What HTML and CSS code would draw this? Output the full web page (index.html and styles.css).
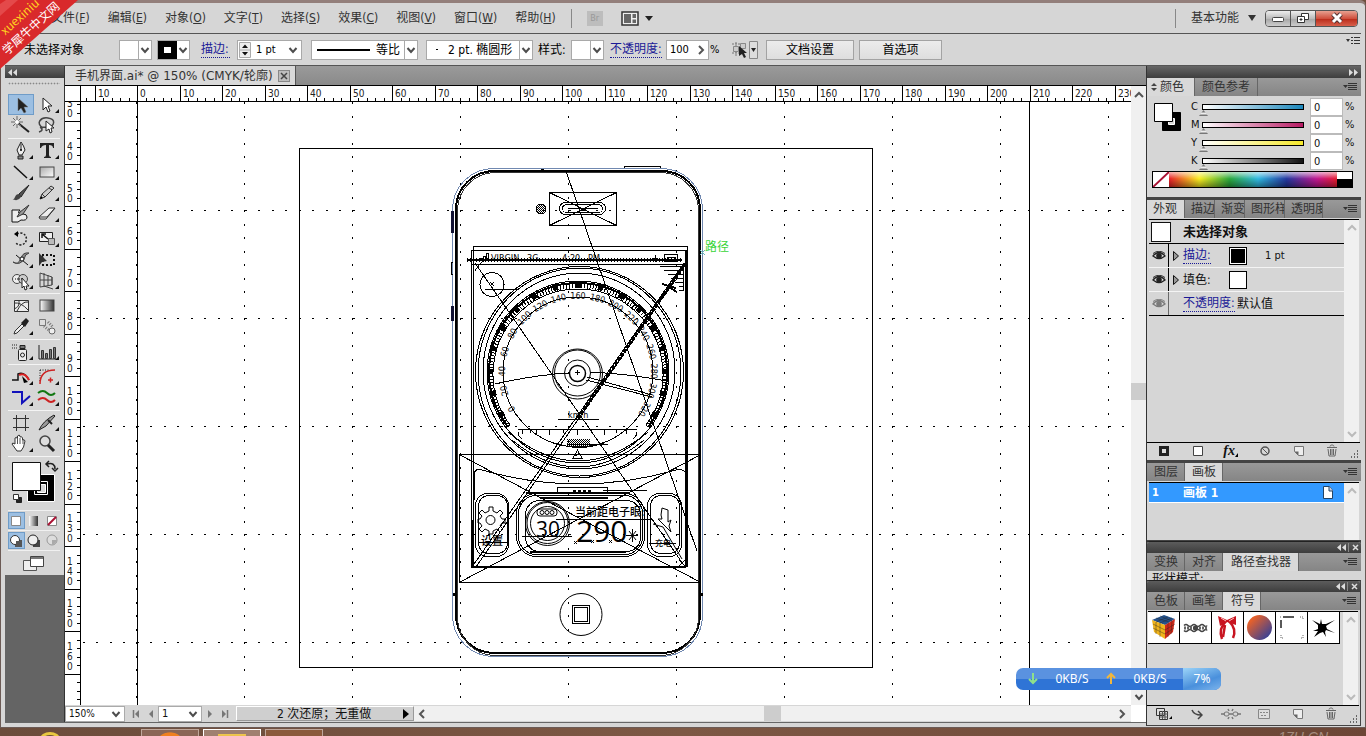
FILE: index.html
```html
<!DOCTYPE html>
<html lang="zh-CN">
<head>
<meta charset="utf-8">
<title>手机界面.ai</title>
<link rel="stylesheet" href="styles.css">
</head>
<body>
<svg class="defs" aria-hidden="true">
  <symbol id="chev" viewBox="0 0 10 10"><path d="M1.500 3l3.500 4 3.500-4" fill="none" stroke="#4d4d4d" stroke-width="2"/></symbol>
  <symbol id="flyout" viewBox="0 0 14 10"><path d="M0 3h5l-2.500 3z" fill="#333"/><path d="M5 1.500h9M5 3.500h9M5 5.500h9M5 7.500h9" stroke="#333"/></symbol>
  <symbol id="trash" viewBox="0 0 12 13"><path d="M1 3.500h10M4 2.500c0-2 4-2 4 0M2 5l1 7h6l1-7M4.500 5v6M6 5v6M7.500 5v6" fill="none" stroke="#666"/></symbol>
  <symbol id="newdoc" viewBox="0 0 12 12"><path d="M1.500 1.500h9v9h-5l-4-4z" fill="#eee" stroke="#777"/><path d="M1.500 6.500h4v4z" fill="#666"/></symbol>
  <symbol id="eye" viewBox="0 0 14 10"><path d="M1 5Q7-2 13 5 7 10 1 5z" fill="#ddd" stroke="#222" stroke-width="1.300"/><circle cx="7" cy="4.700" r="2.800" fill="#222"/><path d="M1 2.500Q7-2 13 2.500" fill="none" stroke="#333"/></symbol>
  <symbol id="size" viewBox="0 0 10 10"><path d="M8 1h1M5 4h1M8 4h1M2 7h1M5 7h1M8 7h1" stroke="#666" stroke-width="2"/></symbol>
</svg>

<div class="window">
  <header class="menubar">
    <nav class="menus">
      <button>文件(<u>F</u>)</button><button>编辑(<u>E</u>)</button><button>对象(<u>O</u>)</button><button>文字(<u>T</u>)</button><button>选择(<u>S</u>)</button><button>效果(<u>C</u>)</button><button>视图(<u>V</u>)</button><button>窗口(<u>W</u>)</button><button>帮助(<u>H</u>)</button>
    </nav>
    <i class="vsep"></i>
    <button class="bridge" disabled>Br</button>
    <button class="arrange" aria-label="排列文档"><svg width="32" height="15"><rect x="1" y="1" width="16" height="13" fill="#eee" stroke="#333" stroke-width="1.500"/><path d="M3 3h7v9H3zM11.500 3H15v4h-3.500zM11.500 8.500H15V12h-3.500z" fill="#666"/><path d="M24 5h8l-4 5z" fill="#222"/></svg></button>
    <div class="grow"></div>
    <i class="vsep"></i>
    <button class="workspace">基本功能 <svg width="8" height="6"><path d="M0 0h8L4 6z" fill="#333"/></svg></button>
    <div class="winbtns">
      <button aria-label="最小化"><svg width="14" height="12"><rect x="1.500" y="5.500" width="11" height="4" rx="1" fill="#fff" stroke="#444"/></svg></button><button aria-label="还原"><svg width="14" height="12"><path d="M5.500 1.500h7v6h-7z" fill="#fff" stroke="#333"/><path d="M1.500 4.500h7v6h-7z" fill="#fff" stroke="#333"/><path d="M4 7h2v1H4z" stroke="#333"/></svg></button><button class="close" aria-label="关闭"><svg width="16" height="12"><path d="M4 2l8 8M12 2l-8 8" stroke="#533" stroke-width="5"/><path d="M4 2l8 8M12 2l-8 8" stroke="#fff" stroke-width="3"/></svg></button>
    </div>
  </header>

  <div class="control">
    <span class="noselect">未选择对象</span>
    <button class="combo swatchbox" aria-label="填色"><b></b><svg class="chev"><use href="#chev"/></svg></button>
    <button class="combo swatchbox black" aria-label="描边颜色"><b></b><svg class="chev"><use href="#chev"/></svg></button>
    <a class="lk stroke-link" href="#">描边:</a>
    <span class="combo weight"><svg width="12" height="16"><path d="M.5.500h11v15H.5zM.5 8h11" fill="#eee" stroke="#aaa"/><path d="M3 6h6L6 2.500zM3 10h6l-3 3.500z" fill="#111"/></svg><select aria-label="描边粗细"><option>1 pt</option></select><svg class="chev"><use href="#chev"/></svg></span>
    <span class="combo profile"><i></i><select aria-label="宽度配置"><option>等比</option></select><svg class="chev"><use href="#chev"/></svg></span>
    <span class="combo brush"><i></i><select aria-label="画笔"><option>2 pt. 椭圆形</option></select><svg class="chev"><use href="#chev"/></svg></span>
    <span class="style-label">样式:</span>
    <button class="combo swatchbox" aria-label="样式"><b></b><svg class="chev"><use href="#chev"/></svg></button>
    <a class="lk opacity-link" href="#">不透明度:</a>
    <span class="combo opacity"><input aria-label="不透明度" value="100"><svg class="chev"><path d="M3 1l4 4-4 4" fill="none" stroke="#555" stroke-width="2"/></svg></span><span class="pct">%</span>
    <button class="similar" aria-label="选择类似对象"><svg width="27" height="18"><path d="M1 3h14M1 12h9M5 1v14" stroke="#777" stroke-dasharray="2 1"/><path d="M2.500 5.500h5v5h-5zM9.500 2.500h5v5h-5z" fill="#ccc" stroke="#888"/><path d="M8 5l8 7h-3l2 4-2 1-2-4-3 2z" fill="#222"/><path d="M18.500.500h8v17h-8z" fill="#ddd" stroke="#888"/><path d="M20 7h5l-2.500 4z" fill="#222"/></svg></button>
    <button class="btn wide">文档设置</button><button class="btn">首选项</button>
    <div class="grow"></div>
    <button class="ctl-menu" aria-label="面板菜单"><svg width="14" height="10"><path d="M0 3h4L2 6z" fill="#333"/><path d="M5 1.500h2M8 1.500h6M5 4.500h2M8 4.500h6M5 7.500h2M8 7.500h6" stroke="#333"/></svg></button>
  </div>

  <div class="main">
    <aside class="tools">
      <div class="tools-head"><svg width="9" height="7"><path d="M4 0v7L0 3.500zM9 0v7L5 3.500z" fill="#ddd"/></svg></div>
      <div class="tools-body">
        <div class="grip"></div>
        <div class="tg">
          <button class="on" aria-label="选择工具"><svg><path d="M9 4v13l3-3 3 5 2-1-2-5h4z" fill="#222" stroke="#777" stroke-width=".5"/></svg></button>
          <button class="more" aria-label="直接选择工具"><svg><path d="M8 4v12l3-3 2 5 2-1-2-5h4z" fill="#fff" stroke="#222"/></svg></button>
          <button aria-label="魔棒工具"><svg><path d="M9 8l11 9" stroke="#222" stroke-width="2"/><path d="M8 1v12M2 7h12M4 3l8 8M12 3l-8 8" stroke="#666"/><circle cx="8" cy="7" r="2" fill="#fff"/></svg></button>
          <button aria-label="套索工具"><svg><path d="M8 13C0 8 6 2 13 3c8 1 7 8 0 9-4 1-9-1-7 1s1 3-2 4" fill="none" stroke="#444" stroke-width="1.500"/><path d="M11 6l8 7h-3l1 4-2 1-1-4-3 2z" fill="#fff" stroke="#222"/></svg></button>
        </div>
        <div class="tg">
          <button class="more" aria-label="钢笔工具"><svg><path d="M12 2q3 4 4 8l-3 5h-3l-2-5q2-4 4-8z" fill="#eee" stroke="#222"/><path d="M12 4v6M9 16h5v3H9z" stroke="#222" fill="#888"/><circle cx="12" cy="10" r="1"/></svg></button>
          <button class="more" aria-label="文字工具"><svg><path d="M5 3h14v5h-1q0-3-4-3v10q0 2 2 2v1H9v-1q2 0 2-2V5Q7 5 6 8H5z" fill="#222"/></svg></button>
          <button class="more" aria-label="直线段工具"><svg><path d="M5 5l13 12" stroke="#111" stroke-width="1.500"/></svg></button>
          <button class="more" aria-label="矩形工具"><svg><rect x="5" y="6" width="14" height="10" fill="url(#g1)" stroke="#444"/></svg></button>
          <button aria-label="画笔工具"><svg><path d="M20 3L10 12l2 3z" fill="#555" stroke="#222"/><path d="M10 12q-3 0-4 3t-3 2q6 3 9-2z" fill="#444"/></svg></button>
          <button class="more" aria-label="铅笔工具"><svg><path d="M5 17l2-5L16 4l3 2-9 9z" fill="#ccc" stroke="#333"/><path d="M7 12l3 3M14 6l3 2" stroke="#333"/><path d="M5 17l1-3 2 2z"/></svg></button>
          <button aria-label="斑点画笔工具"><svg><path d="M3 7h8q-4 4 3 4 4 0 4 3 0 4-6 3l-3 2H3z" fill="#eee" stroke="#111"/><path d="M20 2l-9 7-3 5 6-3z" fill="#999" stroke="#333"/></svg></button>
          <button class="more" aria-label="橡皮擦工具"><svg><path d="M4 14L14 5h6L11 16H5z" fill="#eee" stroke="#333"/><path d="M4 14h6l2 0 8-9" stroke="#333" fill="none"/></svg></button>
        </div>
        <div class="tg">
          <button class="more" aria-label="旋转工具"><svg><path d="M8 6a6 6 0 1 1-1 9" fill="none" stroke="#222" stroke-width="1.500" stroke-dasharray="2 1.500"/><path d="M9 3v6L5 6z"/></svg></button>
          <button class="more" aria-label="比例缩放工具"><svg><path d="M4.500 4.500h13v9h-13z" fill="#eee" stroke="#222"/><path d="M13.500 10.500h6v6h-6z" fill="#bbb" stroke="#555"/><path d="M7 6l6 5M7 10V6h4" stroke="#111" stroke-width="1.500" fill="none"/></svg></button>
          <button class="more" aria-label="宽度工具"><svg><path d="M4 13q5 4 8-4 2-6 8-5-4 1-5 6-4 7-11 3z" fill="#888" stroke="#444"/><path d="M7 6l12 10" stroke="#111"/><circle cx="13" cy="10" r="2" fill="#fff" stroke="#111"/></svg></button>
          <button aria-label="自由变换工具"><svg><path d="M7 6h12v10H8z" fill="none" stroke="#111" stroke-width="2" stroke-dasharray="2 2"/><path d="M4 4v13l3-4 5-1z" fill="#333"/></svg></button>
          <button class="more" aria-label="形状生成器工具"><svg><circle cx="8" cy="9" r="4.500" fill="#eee" stroke="#444"/><circle cx="14" cy="9" r="4.500" fill="#ccc" stroke="#444"/><path d="M6 9h8" stroke="#111" stroke-dasharray="1 1"/><path d="M13 8l7 8h-3l1 3-2 1-1-4-2 2z" fill="#fff" stroke="#222"/></svg></button>
          <button class="more" aria-label="透视网格工具"><svg><path d="M5 3v14M9 3v13M13 5v11M17 7v8M5 3l12 4v8L5 17M5 10h12M9 16l9 3" fill="none" stroke="#444"/></svg></button>
        </div>
        <div class="tg">
          <button aria-label="网格工具"><svg><path d="M5.500 5.500h14v11h-14z" fill="#eee" stroke="#333"/><path d="M5 14q6-2 5-8M8 16q5-10 11-9M5 8q7-1 14 7" fill="none" stroke="#333"/></svg></button>
          <button aria-label="渐变工具"><svg><rect x="5" y="5" width="14" height="11" fill="url(#g2)" stroke="#444"/></svg></button>
          <button class="more" aria-label="吸管工具"><svg><path d="M5 18l1-3 7-7 2 2-7 7z" fill="#eee" stroke="#333"/><path d="M12 7l4 4 4-6-3-3z" fill="#222"/></svg></button>
          <button aria-label="混合工具"><svg><path d="M4.500 3.500h6v6h-6z" fill="#ddd" stroke="#777"/><path d="M9 10l6 5M13 6l5 5" stroke="#777" stroke-dasharray="1 1.500" stroke-width="3"/><circle cx="17" cy="15" r="3" fill="#eee" stroke="#666"/></svg></button>
        </div>
        <div class="tg">
          <button class="more" aria-label="符号喷枪工具"><svg><rect x="9.500" y="8.500" width="8" height="11" rx="1" fill="#eee" stroke="#222"/><path d="M11 4.500h5v3h-5z" fill="#777" stroke="#222"/><circle cx="13.500" cy="14" r="2" fill="none" stroke="#222"/><path d="M3 4h6M3 7h5" stroke="#222" stroke-dasharray="1 1"/></svg></button>
          <button class="more" aria-label="柱形图工具"><svg><path d="M4 4v14h17" fill="none" stroke="#222"/><path d="M6.500 9.500h2v8h-2zM10.500 12.500h2v5h-2zM14.500 8.500h2v9h-2zM18.500 6.500h2v11h-2z" fill="#777" stroke="#333"/></svg></button>
        </div>
        <div class="tg">
          <button class="more" aria-label="路径工具"><svg><path d="M3 14h6V8q6-3 11 6" fill="none" stroke="#111" stroke-width="1.500"/><path d="M10 9q6-3 10 5" fill="none" stroke="#d22" stroke-width="2"/><path d="M13 10l6 6-4 1z"/></svg></button>
          <button class="more" aria-label="圆角工具"><svg><path d="M5 4h10M5 4v12" stroke="#111" stroke-dasharray="1 1.500"/><path d="M5 18q0-14 15-14M13 14h5M15.500 11.500v5" fill="none" stroke="#c22" stroke-width="1.500"/></svg></button>
          <button class="more" aria-label="折线工具"><svg><path d="M3 5h10v11l8-7" fill="none" stroke="#11b" stroke-width="2"/></svg></button>
          <button class="more" aria-label="平滑工具"><svg><path d="M3 6q5-4 9 0t8 0" fill="none" stroke="#171" stroke-width="2"/><path d="M3 13q5-4 9 0t8 0" fill="none" stroke="#c22" stroke-width="2"/></svg></button>
        </div>
        <div class="tg">
          <button aria-label="画板工具"><svg><path d="M7.500 3v16M16.500 3v16M4 6.500h16M4 15.500h16" stroke="#333" fill="none"/></svg></button>
          <button class="more" aria-label="切片工具"><svg><path d="M4 18Q8 9 19 3l1 1-9 10z" fill="#999" stroke="#222"/><path d="M13 8l4 4" stroke="#222" stroke-width="2"/></svg></button>
          <button class="more" aria-label="抓手工具"><svg><path d="M8 18l-5-7q0-2 3 0V5q2-2 2.500 1V3q2-2 2.500 0V4q2-1 2.500 1v2q2-1 2.500 1-1 7-4 10z" fill="#fff" stroke="#333"/><path d="M8.500 5v6M11 5v6M14 6v5" stroke="#555"/></svg></button>
          <button aria-label="缩放工具"><svg><circle cx="10" cy="8" r="5" fill="#ddd" stroke="#444" stroke-width="1.500"/><path d="M13 12l6 6" stroke="#222" stroke-width="3"/></svg></button>
        </div>
        <button class="fillstroke" aria-label="填色和描边"><svg width="56" height="54"><path d="M21.500 17.500h27v27h-27z" fill="#000" stroke="#fff"/><path d="M28.500 24.500h13v13h-13z" fill="#000" stroke="#fff"/><path d="M31.500 27.500h8v8h-8z" fill="#d6d6d6" stroke="#fff"/><path d="M6.500 5.500h28v28h-28z" fill="#fff" stroke="#111"/><path d="M41 7q8-2 8 5M43 4l-3 3 3 3M46 11l3 3 3-3" fill="none" stroke="#222" stroke-width="1.500"/><path d="M10.500 40.500h5v5h-5z" fill="#222" stroke="#222"/><path d="M7.500 37.500h5v5h-5z" fill="#fff" stroke="#333"/></svg></button>
        <div class="modes three">
          <button class="on" aria-label="颜色"><svg><path d="M3.500 3.500h9v9h-9z" fill="#fff" stroke="#888"/></svg></button>
          <button aria-label="渐变"><svg><path d="M3 3h9v10H3z" fill="url(#g2)"/></svg></button>
          <button aria-label="无"><svg><path d="M3.500 3.500h9v9h-9z" fill="#fff" stroke="#888"/><path d="M4 12l8-8" stroke="#a13" stroke-width="2"/></svg></button>
        </div>
        <div class="modes three">
          <button class="on" aria-label="正常绘图"><svg><path d="M7 7h7v7H7z" fill="#555"/><circle cx="7" cy="7" r="4.500" fill="#fff" stroke="#333"/><path d="M8 8h6v6H8z" fill="#555"/></svg></button>
          <button aria-label="背面绘图"><svg><path d="M7 7h7v7H7z" fill="#444"/><circle cx="7" cy="7" r="5" fill="#eee" stroke="#222"/></svg></button>
          <button aria-label="内部绘图"><svg><circle cx="8" cy="7" r="5" fill="#ddd" stroke="#999"/><path d="M8 7h5q-1 4-5 5z" fill="#aaa"/></svg></button>
        </div>
        <button class="screen" aria-label="更改屏幕模式"><svg width="24" height="17"><path d="M1.500 5.500h13v10h-13z" fill="#eee" stroke="#555"/><path d="M8.500 1.500h13v10h-13z" fill="#fff" stroke="#444"/><path d="M9 2h12v2H9z" fill="#777"/></svg></button>
      </div>
    </aside>

    <section class="doc">
      <div class="tabs"><div class="doctab">手机界面.ai* @ 150% (CMYK/轮廓)<button aria-label="关闭文档"><svg width="10" height="10"><path d="M2 2l6 6M8 2l-6 6" stroke="#444" stroke-width="1.500"/></svg></button></div></div>
      <div class="work">
        <div class="corner"></div>
        <svg class="hruler" id="hruler"></svg>
        <svg class="vruler" id="vruler"></svg>
        <svg class="canvas" id="canvas">
          <defs>
            <linearGradient id="g1" x2="1" y2="1"><stop stop-color="#aaa"/><stop offset="1" stop-color="#fff"/></linearGradient>
            <linearGradient id="g2"><stop stop-color="#fff"/><stop offset="1" stop-color="#333"/></linearGradient>
            <pattern id="hatch" width="2" height="2" patternUnits="userSpaceOnUse"><path d="M0 0h1v1H0zM1 1h1v1H1z"/></pattern>
          </defs>
          <g transform="translate(-81 -102)" fill="none" stroke="#000" shape-rendering="crispEdges">
            <g id="grid"></g>
            <path d="M137.500 102v605M1029.500 102v605M299.500 148.500h573v519h-573z"/>
            <rect x="452.500" y="168.500" width="250" height="488" rx="41" stroke="#7088b0"/>
            <rect x="456" y="171" width="244" height="482" rx="38" stroke-width="2"/>
            <rect x="457.500" y="172.500" width="241" height="483" rx="38" stroke="#333"/>
            <path d="M624 168v-1.500h36v1.500"/>
            <path d="M452.500 211v22M452.500 306v15" stroke="#113" stroke-width="3"/><path d="M453 262.500h-2v12h2"/>
            <path d="M453 594h3M700 594h3M541 170h3" stroke-width="3"/>
            <path d="M549.500 192.500h67v33h-67zl67 33M549.500 225.500l67-33M568 208.500h30"/>
            <rect x="559.500" y="202.500" width="46" height="12" rx="6"/><rect x="562.500" y="204.500" width="40" height="8" rx="4"/><path d="M581 208h4v2h-4z" fill="#000"/>
            <circle cx="541" cy="209" r="5" fill="url(#hatch)"/>
            <path d="M566 171l131 380M475 263l208 301"/>
            <path d="M473.500 567V246.500h214V567M471.500 567V250.500h215M471 264.500h216"/>
            <path d="M686 250v317M472 520v47h214" stroke-width="2"/>
            <path d="M687 262L476 567M684 263L472 567"/>
            <path d="M686 263L577 420" stroke-width="3" stroke-dasharray="4 1"/>
            <path d="M467 259.500h215" stroke-width="4" stroke-dasharray="1 2"/><path d="M467 259.500h215" stroke-width="2"/>
            <g fill="#000" stroke="none" class="tiny"><text x="491" y="261">VIRGIN</text><text x="527" y="261">3G</text><text x="562" y="261">4:20</text><text x="588" y="261">PM</text></g>
            <path d="M480.500 261v-3h2v3M483.500 261v-5h2v5M486.500 261v-8h2v8M664.500 254.500h13v7h-13zM667 257h8v3h-8zM652 258h6M655 255v7"/>
            <path d="M660 266.500h23v24M664 270.500h19M668 274.500h15M671 278.500h12M675 282.500h8M679 286.500h4M679 290.500h4"/><path d="M662 284l14 4M669 287l8 5" stroke-width="2"/>
            <path d="M475 271q4-8 13-13"/>
            <circle cx="492" cy="284.500" r="12"/><path d="M485 289.500h32M490 282l4 4M494 282l-4 4"/>
            <g>
              <ellipse cx="579.500" cy="372" rx="104" ry="105.500"/><ellipse cx="579.500" cy="372" rx="101.500" ry="104"/>
              <ellipse cx="579" cy="371" rx="96" ry="98"/>
              <circle cx="578" cy="372" r="91"/>
              <circle cx="578" cy="372" r="75"/>
              <path d="M508 427A88 88 0 1 1 648 427" stroke-width="5" stroke-dasharray="1 2"/>
              <path d="M510 425A85 85 0 1 1 646 425"/>
              <path d="M508 427A89 89 0 1 1 648 427" stroke-width="2"/>
              <g id="dial"></g>
              <path d="M508 432Q578 490 648 432M512 440Q578 494 644 440M556 443q22 9 48 0"/>
            </g>
            <g shape-rendering="auto"><circle cx="577.500" cy="374" r="25"/><circle cx="577.500" cy="373" r="23"/><circle cx="577.500" cy="373" r="13"/><circle cx="577.500" cy="373.500" r="8" stroke-width="1.500"/></g>
            <path d="M575 372h5M577.500 370v5M495 384q40-9 73-11M590 372q40 2 77 9M587 377l65 18M586 380l66 17"/>
            <text x="568" y="418" class="tiny" fill="#000" stroke="none">km/h</text>
            <path d="M558 419.500h41M518 429.500h119M522 429v5M530 429v4M536 429v5M549 429v6M563 429v4M577 429v6M591 429v4M604 429v6M616 429v4M626 429v5M519 432q-2 3 3 7M636 432q2 3-3 7"/>
            <rect x="567" y="439" width="23" height="8" fill="url(#hatch)" stroke="none"/><path d="M567 444.500h41"/>
            <path d="M573 458l4.500-8 4.500 8zM575 456l5-3"/>
            <path d="M459.500 454.500h241v128h-241z"/><path d="M460 455l240 127M460 582L700 455"/>
            <path d="M474 500v-25q0-7 8-5 97 28 194 0 9-2 10 5v25"/>
            <rect x="557.500" y="487.500" width="50" height="5" rx="1"/><path d="M573 491h20" stroke-width="3" stroke-dasharray="3 2"/><path d="M603 490.500h44"/>
            <rect x="516.500" y="493.500" width="128" height="63" rx="20"/><rect x="518.500" y="495.500" width="124" height="59" rx="18"/><rect x="525.500" y="500.500" width="115" height="51" rx="14"/>
            <path d="M526 493h104M540 498h68M530 552h96" stroke-width="2"/>
            <rect x="475.500" y="493.500" width="33" height="63" rx="12"/><rect x="478.500" y="495.500" width="29" height="58" rx="10"/>
            <rect x="647.500" y="493.500" width="34" height="63" rx="12"/><rect x="650.500" y="495.500" width="29" height="58" rx="10"/>
            <g shape-rendering="auto"><path d="M489 507h4v4l4 2 3-3 3 3-3 3 2 3h3v4h-3l-2 3 3 3-3 3-3-3-4 2v3h-4v-3l-4-2-3 3-3-3 3-3-2-3h-2v-4h2l2-3-3-3 3-3 3 3 4-2z"/><circle cx="490.500" cy="520" r="4.500"/>
              <path d="M662 508l6 2 0 12 3-2-2 6 2 6-8-8-5-5h4l-1-4zM653 524l10 3 19 32"/>
              <circle cx="547.500" cy="523.500" r="22"/><circle cx="547.500" cy="523.500" r="17"/><circle cx="547.500" cy="523" r="20.500"/><rect x="537" y="509" width="20" height="7" rx="3"/><circle cx="542" cy="512.500" r="2"/><circle cx="547" cy="512.500" r="2"/><circle cx="552" cy="512.500" r="2"/>
              <path d="M574 541l3 3M577 541l-3 3M591 540l3 3M594 540l-3 3M609 540l3 3M612 540l-3 3M629 531l7 9M636 531l-7 9M632.500 529v13M626 535.500h12"/></g>
            <path d="M522 536.500h50M556 519.500h96M478 542.500h31M649 543.500h27M679 560l6 6M685 560l-6 6"/>
            <g fill="#000" stroke="none" class="art"><text x="536" y="537" font-size="21">30</text><text x="576" y="542" font-size="30">290</text><text x="575" y="516" font-size="11" class="cjk heavy">当前距电子眼:</text><text x="481" y="545" font-size="11" class="cjk heavy">设置</text><text x="655" y="546" font-size="8" class="cjk heavy">充电</text></g>
            <g shape-rendering="auto"><circle cx="581" cy="614.500" r="21"/></g><path d="M572.500 605.500h17v18h-17zM574.500 607.500h13v14h-13z"/>
            <path d="M700 250l5 5M705 250l-5 5" stroke="#6bb"/>
            <text x="705" y="251" class="cjk" font-size="12" fill="#3ad43a" stroke="none">路径</text>
          </g>
        </svg>
        <div class="vscroll"><svg width="10" height="10"><path d="M1 7l4-4 4 4" fill="none" stroke="#555" stroke-width="2"/></svg><i></i><svg width="10" height="10"><use href="#chev"/></svg></div>
      </div>
      <footer class="status">
        <span class="st zoom"><select aria-label="缩放"><option>150%</option></select><svg width="10" height="10"><use href="#chev"/></svg></span>
        <button class="nav" aria-label="首项"><svg width="8" height="8"><path d="M1.500 0v8" stroke="#777" stroke-width="1.500"/><path d="M7 0v8L3 4z" fill="#777"/></svg></button>
        <button class="nav" aria-label="上一项"><svg width="8" height="8"><path d="M6 0v8L2 4z" fill="#777"/></svg></button>
        <span class="st page"><select aria-label="画板"><option>1</option></select><svg width="10" height="10"><use href="#chev"/></svg></span>
        <button class="nav" aria-label="下一项"><svg width="8" height="8"><path d="M2 0v8l4-4z" fill="#777"/></svg></button>
        <button class="nav last" aria-label="末项"><svg width="8" height="8"><path d="M6.500 0v8" stroke="#777" stroke-width="1.500"/><path d="M1 0v8l4-4z" fill="#777"/></svg></button>
        <button class="info"><span>2 次还原；无重做</span><svg width="6" height="10"><path d="M0 0v10l6-5z"/></svg></button>
        <div class="hscroll"><svg width="10" height="10"><path d="M7 1L3 5l4 4" fill="none" stroke="#555" stroke-width="2"/></svg><i></i><svg width="10" height="10"><path d="M3 1l4 4-4 4" fill="none" stroke="#555" stroke-width="2"/></svg></div>
        <div class="endcap"></div>
      </footer>
    </section>

    <aside class="dock">
      <div class="dock-head"><svg width="9" height="7"><path d="M0 0v7l4-3.500zM5 0v7l4-3.500z" fill="#ddd"/></svg></div>
      <section class="panel color">
        <div class="ptabs"><button class="act"><svg width="6" height="10"><path d="M0 4h6L3 1zM0 6h6L3 9z" fill="#444"/></svg>颜色</button><button class="tab-ref">颜色参考</button><svg class="fly"><use href="#flyout"/></svg></div>
        <div class="cbody">
          <svg class="fs" width="34" height="34"><path d="M9.500 9.500h18v18h-18z" fill="#000" stroke="#000"/><path d="M15.500 15.500h6v6h-6z" fill="#d6d6d6" stroke="#fff"/><path d="M1.500.500h18v18h-18z" fill="#fff" stroke="#000"/></svg>
          <div class="sliders">
            <div class="sl"><label for="c">C</label><input class="rc" id="c" type="range" value="0"><input aria-label="C 值" value="0"><span>%</span></div>
            <div class="sl"><label for="m">M</label><input class="rm" id="m" type="range" value="0"><input aria-label="M 值" value="0"><span>%</span></div>
            <div class="sl"><label for="y">Y</label><input class="ry" id="y" type="range" value="0"><input aria-label="Y 值" value="0"><span>%</span></div>
            <div class="sl"><label for="k">K</label><input class="rk" id="k" type="range" value="0"><input aria-label="K 值" value="0"><span>%</span></div>
          </div>
        </div>
        <div class="spectrum"><svg width="16" height="15"><path d="M0 0h16v15H0z" fill="#fff"/><path d="M0 15L16 0" stroke="#a13" stroke-width="2"/></svg><i></i><b></b></div>
      </section>
      <section class="panel appear">
        <div class="ptabs narrow"><button class="act">外观</button><button>描边</button><button>渐变</button><button>图形样式</button><button>透明度</button><svg class="fly"><use href="#flyout"/></svg></div>
        <div class="list">
          <div class="rows">
            <div class="row head"><i class="thumb"></i><strong>未选择对象</strong></div>
            <div class="row"><button class="eye" aria-label="显示描边"><svg width="14" height="10"><use href="#eye"/></svg></button><svg width="8" height="12"><path d="M1.500 1.500v9l5-4.500z" fill="#999" stroke="#111"/></svg><a class="lk" href="#">描边:</a><i class="sw k"></i><span class="pt">1 pt</span></div>
            <div class="row"><button class="eye" aria-label="显示填色"><svg width="14" height="10"><use href="#eye"/></svg></button><svg width="8" height="12"><path d="M1.500 1.500v9l5-4.500z" fill="#999" stroke="#111"/></svg><span class="nm">填色:</span><i class="sw"></i></div>
            <div class="row end"><button class="eye dim" aria-label="显示不透明度"><svg width="14" height="10"><use href="#eye"/></svg></button><a class="lk op" href="#">不透明度:</a><span>默认值</span></div>
          </div>
          <div class="pscroll"><svg width="10" height="10"><path d="M1 7l4-4 4 4"/></svg><svg width="10" height="10"><path d="M1 3l4 4 4-4"/></svg></div>
        </div>
        <div class="pfoot"><button aria-label="新描边"><svg width="12" height="12"><path d="M2.500 2.500h7v7h-7z" fill="#ddd" stroke="#222" stroke-width="3"/></svg></button><button aria-label="新填色"><svg width="12" height="12"><path d="M1.500 1.500h9v9h-9z" fill="#fff" stroke="#444"/></svg></button><button class="fx">fx<svg width="4" height="12"><path d="M3 8v4H0z"/></svg></button><button aria-label="清除外观"><svg width="12" height="12"><circle cx="6" cy="6" r="4" fill="none" stroke="#555" stroke-width="1.500"/><path d="M3 3l6 6" stroke="#555"/></svg></button><button aria-label="复制"><svg width="12" height="12"><use href="#newdoc"/></svg></button><button aria-label="删除"><svg width="12" height="13"><use href="#trash"/></svg></button><svg class="size" width="10" height="10"><use href="#size"/></svg></div>
      </section>
      <section class="panel boards">
        <div class="ptabs"><button>图层</button><button class="act">画板</button><svg class="fly"><use href="#flyout"/></svg></div>
        <div class="list">
          <div class="rows"><div class="board"><b>1</b><strong>画板 1</strong><svg width="10" height="13"><path d="M.5.500h6l3 4v8h-9z" fill="#fff" stroke="#246"/><path d="M6 0v5h4" fill="#ccd" stroke="#246"/></svg></div></div>
          <div class="pscroll"><svg width="10" height="10"><path d="M1 7l4-4 4 4"/></svg></div>
        </div>
      </section>
      <section class="float path">
        <div class="fhead"><svg width="24" height="9"><path d="M4 1v7L0 4.500zM9 1v7L5 4.500z" fill="#ddd"/><path d="M11.500 0v9" stroke="#888"/><path d="M16 2l5 5M21 2l-5 5" stroke="#ddd" stroke-width="1.500"/></svg></div>
        <div class="ptabs"><button>变换</button><button>对齐</button><button class="act">路径查找器</button><svg class="fly"><use href="#flyout"/></svg></div>
        <div class="clip">形状模式:</div>
      </section>
      <section class="float symbols">
        <div class="fhead"><svg width="24" height="9"><path d="M4 1v7L0 4.500zM9 1v7L5 4.500z" fill="#ddd"/><path d="M11.500 0v9" stroke="#888"/><path d="M16 2l5 5M21 2l-5 5" stroke="#ddd" stroke-width="1.500"/></svg></div>
        <div class="ptabs"><button>色板</button><button>画笔</button><button class="act">符号</button><svg class="fly"><use href="#flyout"/></svg></div>
        <div class="list">
          <div class="rows syms">
            <button aria-label="魔方"><svg width="31" height="31"><path d="M4 8l12-5 11 4-10 6z" fill="#24528c"/><path d="M4 8l13 5v14L6 20z" fill="#f0b41c"/><path d="M17 13l10-6-2 13-8 7z" fill="#d02a1a"/><path d="M8 10v12M12 11v14M5 12l12 6M5 16l12 6M20 11v14M24 9l-1 13M17 18l10-6M17 22l9-6M8 6l13 4M12 4l12 5M8 10l12-5M12 11l12-5" stroke="#222" stroke-width=".4" fill="none"/></svg></button>
            <button aria-label="花边"><svg width="31" height="31"><path d="M4 13.500q2-2 4 0t4 0 4 0 4 0 4 0 3 0M4 18.500q2 2 4 0t4 0 4 0 4 0 4 0 3 0" fill="none" stroke="#444" stroke-width="1.500"/><path d="M4 16h23" stroke="#666" stroke-width="3" stroke-dasharray="2 1"/><circle cx="15.500" cy="16" r="2.500" fill="#444"/></svg></button>
            <button aria-label="蝴蝶结"><svg width="31" height="31"><path d="M15 8L6 4l2 10 7-4 9 3V4z" fill="#c81420"/><path d="M14 9q-8 8-4 18M17 9q8 8 4 17M13 13l-2 12" fill="none" stroke="#c81420" stroke-width="2.500"/><path d="M9 6l5 3M22 6l-5 3" stroke="#fbb"/></svg></button>
            <button aria-label="球体"><svg width="31" height="31"><defs><linearGradient id="ball" x2="1" y2="1"><stop offset=".2" stop-color="#e4602c"/><stop offset=".9" stop-color="#31409a"/></linearGradient></defs><circle cx="15.500" cy="15.500" r="12.500" fill="url(#ball)"/></svg></button>
            <button aria-label="边框"><svg width="31" height="31"><path d="M7 5h11M5 8v8" stroke="#222" stroke-width="1.500"/><path d="M4 5h2M24 5h3v3M27 23v3h-3M5 23v3h3" fill="none" stroke="#666" stroke-dasharray="1 1"/></svg></button>
            <button aria-label="墨滴"><svg width="31" height="31"><path d="M10 13l-6-5 8 4 1-5 1 5 4 0 9-4-9 6 1 3 8 4-9-3-1 2 1 5-3-5-3 1-6 4 4-6-5 0 5-2z"/></svg></button>
          </div>
          <div class="pscroll"><svg width="10" height="10"><path d="M1 7l4-4 4 4"/></svg><svg width="10" height="10"><path d="M1 3l4 4 4-4"/></svg></div>
        </div>
        <div class="pfoot"><button aria-label="符号库"><svg width="18" height="13"><path d="M1.500 1.500h8v7h-8zM4.500 4.500h8v8h-8z" fill="#ddd" stroke="#333"/><path d="M5 7h8M5 10h8M7.500 4v8M10 4v8" stroke="#555"/><path d="M17 9v3h-3z"/></svg></button><button aria-label="置入符号"><svg width="12" height="12"><path d="M1 2q2 5 9 5M7 3l4 4-4 4" fill="none" stroke="#444" stroke-width="1.500"/></svg></button><button aria-label="断开链接"><svg width="22" height="12"><path d="M1 6h4M17 6h4M9 6h4M8 1l1 2M13 1l-1 2M8 11l1-2M13 11l-1-2" stroke="#777" stroke-width="1.500"/><rect x="4" y="4" width="5" height="4" rx="2" fill="none" stroke="#777"/><rect x="13" y="4" width="5" height="4" rx="2" fill="none" stroke="#777"/></svg></button><button aria-label="符号选项"><svg width="14" height="12"><path d="M1.500 1.500h11v9h-11z" fill="#ddd" stroke="#888"/><path d="M3 4.500h8M4 7.500h6" stroke="#888" stroke-dasharray="2 1"/></svg></button><button aria-label="新建符号"><svg width="12" height="12"><use href="#newdoc"/></svg></button><button aria-label="删除符号"><svg width="12" height="13"><use href="#trash"/></svg></button><svg class="size" width="10" height="10"><use href="#size"/></svg></div>
      </section>
    </aside>
  </div>
</div>

<div class="taskbar"><i class="ie"></i><i class="tb"></i><i class="tb lit"></i><i class="tb dimmed"></i><span>17U.CN</span></div>

<svg class="ribbon" width="80" height="72"><path d="M0 0h78L0 69z" fill="#d9292b"/><path d="M6 0h12L0 16V4z" fill="#e4494a"/><g class="cjk" transform="rotate(-42)"><text x="-20" y="30" font-size="12" fill="#ffd21f">xuexiniu</text><text x="-32" y="46" font-size="12" fill="#fff">学犀牛中文网</text></g></svg>

<div class="netbar"><svg width="12" height="14"><path d="M6 1v10M2 7l4 4 4-4" fill="none" stroke="#8fe08a" stroke-width="2"/></svg><span>0KB/S</span><svg width="12" height="14"><path d="M6 12V3M2 6l4-4 4 4" fill="none" stroke="#f0b63c" stroke-width="2"/></svg><span>0KB/S</span><b>7%</b></div>
<script src="draw.js"></script>
</body>
</html>
```

FILE: draw.js
```javascript
const NS = "http://www.w3.org/2000/svg";
const STEP = 42.5;
const byId = (id) => document.getElementById(id);

function add(parent, name, attrs, text) {
  const el = document.createElementNS(NS, name);
  for (const k in attrs) el.setAttribute(k, attrs[k]);
  if (text) el.textContent = text;
  parent.appendChild(el);
}

function drawHorizontal(ruler) {
  const end = ruler.clientWidth;
  let d = "";
  for (let i = -6; 56 + i * STEP / 5 < end; i++) {
    const x = Math.round(56 + i * STEP / 5) + 0.5;
    d += `M${x} 16V${i % 5 === 0 ? 0 : 12}`;
  }
  add(ruler, "path", { d, stroke: "#000" });
  for (let n = -1; 56 + n * STEP < end - 10; n++)
    add(ruler, "text", { x: Math.round(56 + n * STEP) + 3, y: 11 }, String(Math.abs(n * 10)));
}

function drawVertical(ruler) {
  const end = ruler.clientHeight;
  let d = "";
  for (let i = -2; 19 + i * STEP / 5 < end; i++) {
    const y = Math.round(19 + i * STEP / 5) + 0.5;
    d += `M16 ${y}H${i % 5 === 0 ? 0 : 12}`;
  }
  add(ruler, "path", { d, stroke: "#000" });
  for (let n = 0; 19 + n * STEP < end; n++) {
    const s = String(30 + n * 10);
    const y = Math.round(19 + n * STEP) - 4;
    [...s].forEach((c, i) => add(ruler, "text", { x: 2, y: y - (s.length - 1 - i) * 10 }, c));
  }
}

function drawGrid(grid, w, h) {
  for (let x = 136.5; x < w + 81; x += 108)
    add(grid, "path", { d: `M${x} 102V${h + 102}`, "stroke-dasharray": "2 11.5" });
  for (let y = 210.5; y < h + 102; y += 108)
    add(grid, "path", { d: `M82.5 ${y}H${w + 81}`, "stroke-dasharray": "2 11.5" });
}

function draw() {
  const parts = [byId("hruler"), byId("vruler"), byId("grid")];
  parts.forEach((p) => p.replaceChildren());
  drawHorizontal(parts[0]);
  drawVertical(parts[1]);
  drawGrid(parts[2], byId("canvas").clientWidth, byId("canvas").clientHeight);
}
draw();
addEventListener("resize", draw);

const dial = byId("dial");
for (let i = 0; i <= 16; i++) {
  const turn = `rotate(${(i - 8) * 14.9} 578 372)`;
  add(dial, "text", { x: 578, y: 299, transform: turn, "text-anchor": "middle", class: "num" }, String(i * 20));
  add(dial, "path", { d: "M576 282h4v5h-4z", transform: turn, fill: "#000" });
}
```

FILE: styles.css
```css
* { box-sizing: border-box; }
html, body { height: 100%; }
body {
  margin: 0; display: flex; flex-direction: column; overflow: hidden; background: #6f4e3c; color: #111;
  font: 12px/16px "DejaVu Sans Condensed", "Noto Sans CJK SC", sans-serif;
}
button, select, input { font: inherit; color: inherit; padding: 0; margin: 0; border: 0; background: none; border-radius: 0; appearance: none; min-width: 0; }
button { display: flex; align-items: center; justify-content: center; white-space: nowrap; }
svg { display: block; flex: none; }
.defs { position: absolute; width: 0; height: 0; }
.grow { flex: 1; }
.lk { color: #1a1a96; text-decoration: none; border-bottom: 1px dotted #1a1a96; line-height: 15px; white-space: nowrap; }
.cjk { font-family: "Noto Sans CJK SC", sans-serif; }
.heavy { font-weight: 500; }

.window { flex: 1; min-height: 0; display: flex; flex-direction: column; background: #d6d6d6; border: 1px solid #6b5a55; border-top: 3px solid #937f7b; border-radius: 6px 6px 0 0; padding: 0 4px 4px; }
.menubar { display: flex; align-items: center; height: 30px; flex: none; color: #333; padding: 0 3px 0 46px; }
.menus { display: flex; gap: 18px; }
.vsep { width: 1px; height: 19px; background: #888; margin: 0 15px; }
.bridge { width: 16px; height: 15px; background: #bdbdbd; color: #999; font-size: 9px; }
.arrange { margin-left: 18px; }
.workspace { gap: 9px; margin-right: 9px; }
.winbtns { display: flex; height: 17px; border: 1px solid #555; border-radius: 4px; overflow: hidden; }
.winbtns button { width: 25px; background: linear-gradient(#eee, #bbb 50%, #a5a5a5 51%, #ccc); border-right: 1px solid #555; }
.winbtns .close { width: 41px; border: 0; background: linear-gradient(#e8a090, #d0503e 50%, #b92a18 51%, #d8604c); }

.control { display: flex; align-items: center; height: 33px; flex: none; border-top: 1px solid #555; border-bottom: 1px solid #555; padding-left: 19px; color: #000; }
.noselect { width: 95px; }
.combo { display: flex; align-items: center; height: 20px; background: #fff; border: 1px solid #a9a9a9; margin-right: 5px; }
.combo select { flex: 1; }
.chev { width: 10px; height: 10px; margin: 0 1px; }
.swatchbox { width: 33px; justify-content: space-between; }
.swatchbox b { width: 20px; height: 18px; background: #fff; border-right: 1px solid #aaa; }
.swatchbox.black b { border: 6px solid #000; background: #fff; }
.stroke-link { width: 29px; margin: 0 7px 0 6px; }
.weight { width: 65px; padding-left: 1px; margin-right: 9px; font-size: 11px; gap: 5px; }
.weight .chev { margin-right: 3px; }
.profile { width: 107px; margin-right: 8px; padding-left: 5px; }
.profile i { width: 53px; height: 2px; background: #000; margin-right: 6px; }
.profile select, .brush select { border-right: 1px solid #aaa; height: 18px; }
.brush { width: 107px; padding-left: 9px; }
.brush i { width: 2px; height: 1px; background: #000; margin-right: 10px; }
.style-label { width: 33px; }
.opacity-link { width: 52px; margin: 0 4px 0 1px; }
.opacity { width: 43px; font-size: 11px; margin-right: 1px; }
.opacity input { width: 28px; padding-left: 3px; flex: none; }
.pct { width: 21px; font-size: 11px; }
.similar { margin-right: 8px; }
.btn { height: 20px; width: 83px; border: 1px solid #a3a3a3; background: linear-gradient(#ececec, #dedede); }
.btn.wide { width: 88px; margin-right: 5px; }
.ctl-menu { align-self: flex-start; padding-top: 2px; margin-right: 1px; }

.main { flex: 1; min-height: 0; display: flex; border-bottom: 1px solid #666; }
.tools { width: 60px; flex: none; background: #646464; border-right: 1px solid #333; }
.tools-head, .dock-head { height: 12px; background: linear-gradient(#666, #3e3e3e); display: flex; align-items: center; padding: 0 3px; }
.dock-head { justify-content: flex-end; flex: none; }
.tools-body { background: #d6d6d6; padding: 0 4px 0 3px; }
.grip { height: 15px; background: radial-gradient(#888 40%, transparent 50%) 0 0 / 3px 3px content-box; padding: 4px 0 8px; }
.tg { display: grid; grid-template-columns: 1fr 1fr; padding: 1px 0 2px; border-bottom: 1px solid #f4f4f4; }
.tg button { height: 21px; position: relative; }
.tg svg { width: 24px; height: 21px; }
.tg .on, .modes .on { background: #9cbfe2; outline: 1px solid #6f9cc8; outline-offset: -1px; }
.more::after { content: ""; position: absolute; right: 1px; bottom: 2px; border: 2px solid #111; border-top-color: transparent; border-left-color: transparent; }
.fillstroke { width: 100%; height: 54px; border-bottom: 1px solid #f0f0f0; }
.three { display: grid; grid-template-columns: 1fr 1fr 1fr; height: 20px; border-bottom: 1px solid #f0f0f0; gap: 1px; padding: 1px 0; }
.three svg { width: 16px; height: 16px; }
.screen { width: 100%; height: 24px; }

.doc { flex: 1; min-width: 0; display: flex; flex-direction: column; }
.tabs { height: 20px; flex: none; background: linear-gradient(#9a9a9a, #8a8a8a); border-bottom: 1px solid #000; display: flex; }
.doctab { display: flex; align-items: center; gap: 5px; padding: 0 5px 0 10px; background: #d9d9d9; border-right: 1px solid #555; color: #333; white-space: nowrap; font-family: "DejaVu Sans", "Noto Sans CJK SC", sans-serif; }
.doctab button { width: 12px; height: 12px; background: #bdbdbd; border: 1px solid #888; }
.work { flex: 1; min-height: 0; display: grid; grid-template: 16px 1fr / 16px 1fr 15px; background: #fff; }
.corner { border-right: 1px solid #000; border-bottom: 1px solid #000; }
.hruler { width: 100%; height: 16px; border-bottom: 1px solid #000; }
.vruler { width: 16px; height: 100%; border-right: 1px solid #000; grid-row: 2; grid-column: 1; }
.hruler text, .vruler text { font-size: 10px; fill: #222; }
.canvas { width: 100%; height: 100%; grid-row: 2; grid-column: 2; }
.tiny { font-size: 9px; }
.num { font-size: 9px; fill: #111; stroke: none; }
.art { font-family: "Open Sans", sans-serif; }
.vscroll { grid-row: 1 / 3; grid-column: 3; background: #f0f0f0; display: flex; flex-direction: column; align-items: center; padding: 4px 0 3px; }
.vscroll i { width: 15px; height: 17px; background: #cdcdcd; margin: 283px 0 auto; }
.status { height: 17px; flex: none; display: flex; align-items: center; background: #d6d6d6; font-size: 11px; }
.st { display: flex; align-items: center; background: #fff; height: 16px; border: 1px solid #aaa; padding: 0 3px; }
.st select { flex: 1; }
.zoom { width: 60px; margin-right: 3px; font-size: 10px; }
.page { width: 44px; }
.nav { width: 15px; height: 16px; }
.last { margin-right: 4px; }
.info { width: 178px; height: 15px; background: #cfcfcf; border: 1px solid; border-color: #fff #999 #999 #fff; font-size: 12px; padding: 0 4px 0 40px; justify-content: space-between; }
.hscroll { flex: 1; height: 15px; background: #f0f0f0; display: flex; align-items: center; padding: 0 4px 0 3px; }
.hscroll i { width: 17px; height: 15px; background: #cdcdcd; margin: 0 auto 0 337px; }
.endcap { width: 15px; height: 17px; background: #fff; }

.dock { width: 215px; flex: none; display: flex; flex-direction: column; border-left: 1px solid #333; background: #444; margin-bottom: -4px; }
.panel { background: #d6d6d6; flex: none; margin-bottom: 3px; display: flex; flex-direction: column; }
.ptabs { height: 18px; flex: none; display: flex; background: linear-gradient(#999, #858585); color: #333; }
.ptabs button { padding: 0 7px; border-right: 1px solid #666; gap: 3px; overflow: hidden; justify-content: flex-start; }
.ptabs .act { background: #d9d9d9; }
.fly { width: 14px; height: 10px; margin: 4px 4px 0 auto; }
.color { height: 119px; }
.color .act { padding: 0 10px 0 4px; }
.color .tab-ref { padding: 0 7px; }
.cbody { display: flex; padding-top: 2px; }
.fs { margin: 5px 4px 0 6px; }
.sl { display: flex; align-items: center; height: 18px; font-size: 11px; }
.sl label { width: 11px; }
.sl input { width: 33px; height: 18px; background: #fff; border: 1px solid #bbb; padding-left: 3px; margin: 0 2px 0 6px; }
.sl input[type="range"] { width: 102px; border: 0; padding: 0; margin: 0; background: none; overflow: visible; }
.sl input::-webkit-slider-runnable-track { height: 6px; border: 1px solid #000; background: linear-gradient(90deg, #fff, #1c87bb); }
.sl .rm::-webkit-slider-runnable-track { background: linear-gradient(90deg, #fff, #b51a62); }
.sl .ry::-webkit-slider-runnable-track { background: linear-gradient(90deg, #fff, #f5e82c); }
.sl .rk::-webkit-slider-runnable-track { background: linear-gradient(90deg, #fff, #111); }
.sl input::-webkit-slider-thumb { appearance: none; width: 9px; height: 6px; margin: 5px 0 0 -4px; background: linear-gradient(#777 2px, #eee 3px, #eee 4px, #777 5px); clip-path: polygon(50% 0, 100% 100%, 0 100%); }
.spectrum { display: flex; height: 17px; border: 1px solid #000; margin: 1px 8px 0 5px; }
.spectrum i { flex: 1; background: linear-gradient(#fffa, transparent 45%, #0006), linear-gradient(90deg, #e8202a, #f8ec20 18%, #2ca83c 36%, #30b8e0 53%, #2438a0 70%, #c01890 88%, #e81c30); }
.spectrum b { width: 15px; background: linear-gradient(#fff 50%, #000 50%); }
.narrow button { width: 30px; padding: 0 0 0 6px; }
.narrow .act { width: 38px; padding: 0 6px; }
.narrow button:nth-child(4) { width: 40px; }
.narrow button:nth-child(5) { width: 38px; }
.appear { height: 260px; }
.list { flex: 1; min-height: 0; display: flex; margin: 1px 2px 0; border-top: 1px solid #000; }
.rows { flex: 1; }
.row { height: 24px; display: flex; align-items: center; border-bottom: 1px solid #f4f4f4; }
.row.head { border-color: #000; }
.row.end { border-color: #000; }
.thumb { width: 20px; height: 20px; border: 1px solid #111; background: #fff; margin: 0 12px 0 2px; }
.row strong { font-size: 13px; }
.eye { width: 20px; height: 23px; border-right: 1px solid #000; margin-right: 3px; }
.dim { opacity: .5; margin-right: 14px; }
.row .lk, .nm { margin-left: 3px; width: 28px; }
.row .op { width: 52px; margin: 0 2px 0 0; }
.sw { width: 18px; height: 18px; border: 1px solid #000; outline: 1px solid #fff; outline-offset: -2px; background: #fff; margin: 0 18px; }
.sw.k { background: #000; }
.pt { font-size: 11px; }
.pscroll { width: 15px; background: #f0f0f0; display: flex; flex-direction: column; align-items: center; justify-content: space-between; padding: 3px 0; }
.pscroll path { fill: none; stroke: #bbb; stroke-width: 2; }
.pfoot { height: 18px; flex: none; display: flex; align-items: center; padding-right: 1px; border-top: 1px solid #000; margin: 0 1px 0 0; }
.pfoot button { flex: 1; height: 15px; align-self: flex-start; }
.pfoot .size { align-self: flex-end; }
.fx { font: italic bold 14px/14px "Liberation Serif", serif; }
.boards { height: 77px; margin-bottom: 1px; }
.boards button { width: 38px; }
.board { height: 20px; background: #39f; color: #fff; display: flex; align-items: center; padding-right: 11px; border-bottom: 1px solid #fff; }
.board b { width: 34px; padding-left: 3px; font-size: 11px; }
.board strong { flex: 1; }
.float { background: #d6d6d6; margin-left: -1px; border-top: 1px solid #222; border-left: 1px solid #333; border-radius: 3px 3px 0 0; overflow: hidden; flex: none; }
.fhead { height: 11px; background: linear-gradient(#5c5c5c, #3d3d3d); display: flex; justify-content: flex-end; align-items: center; }
.float .ptabs button { width: 38px; }
.float .ptabs .act { padding: 0 8px; }
.path .ptabs .act { width: 76px; }
.clip { height: 9px; overflow: hidden; padding-left: 5px; }
.path { height: 39px; }
.symbols { flex: 1; min-height: 0; display: flex; flex-direction: column; border-bottom: 1px solid #444; border-right: 1px solid #444; }
.symbols .list { margin: 1px 2px 0 1px; }
.syms { display: flex; align-items: flex-start; }
.syms button { width: 32px; height: 32px; background: #fff; border-right: 1px solid #000; border-bottom: 1px solid #000; }
.symbols .pfoot { height: 20px; }

.taskbar { height: 8px; flex: none; background: linear-gradient(90deg, #6b4c3b, #7d5844 50%, #6c4636); display: flex; padding-left: 40px; overflow: hidden; }
.ie { width: 20px; height: 14px; border: 3px solid #e8c840; border-radius: 50%; margin: 4px 81px 0 0; flex: none; }
.tb { width: 58px; height: 12px; margin: 1px 4px 0 0; border: 1px solid #c0a89c; background: radial-gradient(ellipse 12px 8px at 50% 100%, #f08020 90%, #8a6656 100%); flex: none; }
.lit { border-color: #fff; background: linear-gradient(#f0c850, #d89820) 50% 4px / 28px 12px no-repeat #a08070; }
.dimmed { background: #8b5a3c; }
.taskbar span { margin: 1px 38px 0 auto; color: #a58d80; font: italic 14px/16px "Liberation Sans", sans-serif; }

.ribbon { position: absolute; left: 0; top: 0; }
.netbar { position: absolute; right: 145px; bottom: 46px; width: 205px; height: 22px; border-radius: 7px; background: linear-gradient(#5a92e0 50%, #2f74d6 52%); color: #fff; display: flex; align-items: center; justify-content: space-between; padding-left: 11px; overflow: hidden; font-family: "Noto Sans", sans-serif; }
.netbar b { width: 38px; line-height: 22px; text-align: center; font-weight: 400; background: linear-gradient(160deg, #9cd4f8, #4a90dc 60%, #7cb4ec); }
```
